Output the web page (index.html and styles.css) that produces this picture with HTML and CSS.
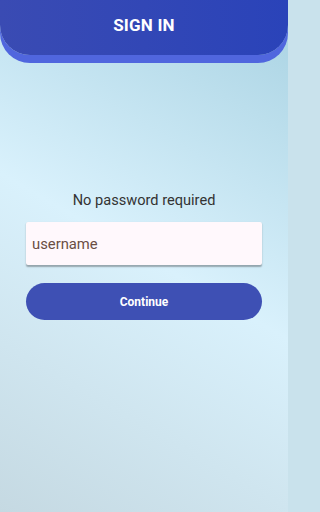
FILE: index.html
```html
<!DOCTYPE html>
<html>
<head>
<meta charset="utf-8">
<link rel="stylesheet" href="styles.css">
</head>
<body>
<div class="app">
  <header class="header"><h1 class="title">SIGN IN</h1></header>
  <main class="content">
    <p class="hint">No password required</p>
    <div class="field"><span class="placeholder">username</span></div>
    <button class="btn">Continue</button>
  </main>
</div>
</body>
</html>
```
FILE: styles.css
```css
html, body { margin: 0; padding: 0; }
html { background: #c9e2ec; }
body {
  height: 512px;
  overflow: hidden;
  font-family: Roboto, "Noto Sans", sans-serif;
}
.app {
  width: 288px;
  height: 512px;
  background: linear-gradient(30deg, #c5d9e2 0%, #d9f1fc 50%, #a8d2e2 100%);
  display: flex;
  flex-direction: column;
}
.header {
  height: 55px;
  flex: none;
  border-radius: 0 0 30px 30px;
  background: linear-gradient(90deg, #3a4bb3, #2a43b9);
  box-shadow: 0 8px 0 #5066de;
  display: flex;
  align-items: center;
  justify-content: center;
}
.title {
  margin: 0;
  color: #fff;
  font-size: 17px;
  font-weight: 700;
  letter-spacing: 0.2px;
  padding-bottom: 6px;
}
.content {
  padding: 135px 26px 0;
  display: flex;
  flex-direction: column;
}
.hint {
  margin: 0 0 12px;
  text-align: center;
  font-size: 14.6px;
  color: #333;
  line-height: 20px;
}
.field {
  height: 43px;
  background: #fff8fc;
  border-radius: 2px;
  box-shadow: 0 1.5px 1.5px rgba(0,0,0,0.3);
  display: flex;
  align-items: center;
  padding-left: 6px;
}
.placeholder {
  font-size: 14.8px;
  color: #6a4e44;
}
.btn {
  margin-top: 18px;
  height: 37px;
  border: none;
  border-radius: 19px;
  background: #3e50b4;
  color: #fff;
  font-family: Roboto, sans-serif;
  font-weight: 700;
  font-size: 12px;
  padding: 0;
}
```
